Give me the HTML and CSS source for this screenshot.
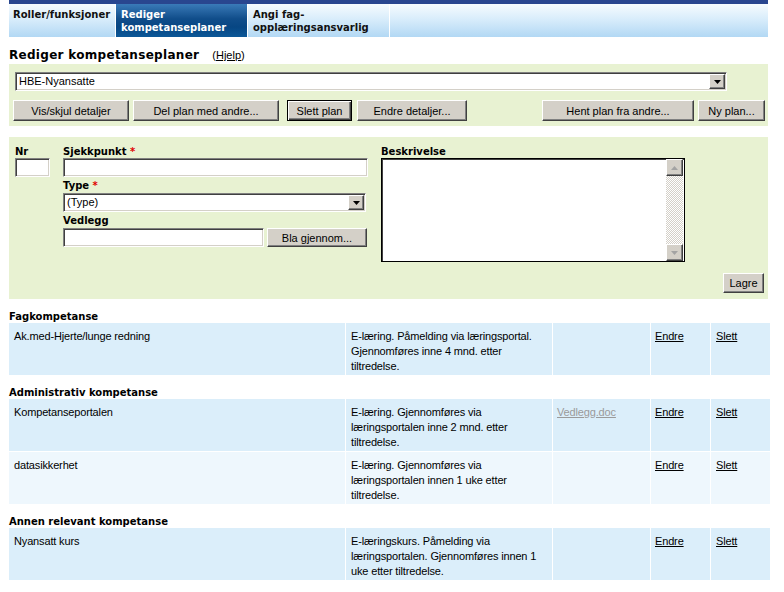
FILE: index.html
```html
<!DOCTYPE html>
<html lang="no">
<head>
<meta charset="utf-8">
<title>Rediger kompetanseplaner</title>
<link rel="stylesheet" href="styles.css">
</head>
<body>
<div class="page">
  <div class="topbar"></div>
  <nav class="tabs">
    <a class="tab tab-roles">Roller/funksjoner</a>
    <a class="tab tab-edit active">Rediger<br>kompetanseplaner</a>
    <a class="tab tab-resp">Angi fag-<br>opplæringsansvarlig</a>
    <div class="tab-fill"></div>
  </nav>

  <h1 class="title">Rediger kompetanseplaner<span class="help">(<u>Hjelp</u>)</span></h1>

  <div class="panel plan-panel">
    <div class="select plan-select">
      <span class="select-text">HBE-Nyansatte</span>
      <span class="select-btn"><svg width="7" height="4" viewBox="0 0 7 4"><path d="M0 0h7L3.5 4z" fill="#000"/></svg></span>
    </div>
    <div class="btn-row">
      <div class="btn-group">
        <button class="btn b-toggle">Vis/skjul detaljer</button>
        <button class="btn b-share">Del plan med andre...</button>
        <button class="btn btn-default b-delete">Slett plan</button>
        <button class="btn b-details">Endre detaljer...</button>
      </div>
      <div class="btn-group">
        <button class="btn b-fetch">Hent plan fra andre...</button>
        <button class="btn b-new">Ny plan...</button>
      </div>
    </div>
  </div>

  <div class="panel item-panel">
    <div class="item-grid">
      <div class="col">
        <div class="lbl">Nr</div>
        <div class="input f-nr"></div>
      </div>
      <div class="col">
        <div class="lbl">Sjekkpunkt <span class="req">*</span></div>
        <div class="input f-main"></div>
        <div class="lbl lbl-next">Type <span class="req">*</span></div>
        <div class="select f-type">
          <span class="select-text">(Type)</span>
          <span class="select-btn"><svg width="7" height="4" viewBox="0 0 7 4"><path d="M0 0h7L3.5 4z" fill="#000"/></svg></span>
        </div>
        <div class="lbl lbl-next">Vedlegg</div>
        <div class="file-row">
          <div class="input f-file"></div>
          <button class="btn b-browse">Bla gjennom...</button>
        </div>
      </div>
      <div class="col">
        <div class="lbl">Beskrivelse</div>
        <div class="textarea">
          <div class="scrollbar">
            <span class="sb-btn"><svg width="7" height="4" viewBox="0 0 7 4"><path d="M3.5 0L7 4H0z" fill="#a3a3a3"/></svg></span>
            <span class="sb-track"></span>
            <span class="sb-btn"><svg width="7" height="4" viewBox="0 0 7 4"><path d="M0 0h7L3.5 4z" fill="#a3a3a3"/></svg></span>
          </div>
        </div>
      </div>
    </div>
    <div class="save-row">
      <button class="btn b-save">Lagre</button>
    </div>
  </div>

  <section class="group">
    <h2 class="group-title">Fagkompetanse</h2>
    <table class="items">
      <colgroup><col class="c-name"><col class="c-desc"><col class="c-file"><col class="c-act"><col class="c-act"></colgroup>
      <tr>
        <td>Ak.med-Hjerte/lunge redning</td>
        <td>E-læring. Påmelding via læringsportal. Gjennomføres inne 4 mnd. etter tiltredelse.</td>
        <td></td>
        <td><a class="link">Endre</a></td>
        <td><a class="link">Slett</a></td>
      </tr>
    </table>
  </section>

  <section class="group">
    <h2 class="group-title">Administrativ kompetanse</h2>
    <table class="items">
      <colgroup><col class="c-name"><col class="c-desc"><col class="c-file"><col class="c-act"><col class="c-act"></colgroup>
      <tr>
        <td>Kompetanseportalen</td>
        <td>E-læring. Gjennomføres via læringsportalen inne 2 mnd. etter tiltredelse.</td>
        <td><a class="link link-file">Vedlegg.doc</a></td>
        <td><a class="link">Endre</a></td>
        <td><a class="link">Slett</a></td>
      </tr>
      <tr class="alt">
        <td>datasikkerhet</td>
        <td>E-læring. Gjennomføres via læringsportalen innen 1 uke etter tiltredelse.</td>
        <td></td>
        <td><a class="link">Endre</a></td>
        <td><a class="link">Slett</a></td>
      </tr>
    </table>
  </section>

  <section class="group">
    <h2 class="group-title">Annen relevant kompetanse</h2>
    <table class="items">
      <colgroup><col class="c-name"><col class="c-desc"><col class="c-file"><col class="c-act"><col class="c-act"></colgroup>
      <tr>
        <td>Nyansatt kurs</td>
        <td>E-læringskurs. Påmelding via læringsportalen. Gjennomføres innen 1 uke etter tiltredelse.</td>
        <td></td>
        <td><a class="link">Endre</a></td>
        <td><a class="link">Slett</a></td>
      </tr>
    </table>
  </section>
</div>
</body>
</html>
```

FILE: styles.css
```css
* { box-sizing: border-box; }

html, body {
  margin: 0;
  padding: 0;
  background: #fff;
}

body {
  font-family: "Liberation Sans", Arial, sans-serif;
  font-size: 11px;
  color: #000;
}

.page {
  margin-left: 9px;
  width: 760px;
}

/* ---------- header ---------- */
.topbar {
  width: 759px;
  height: 4px;
  background: #29468f;
}

.tabs {
  display: flex;
  width: 759px;
  height: 33px;
  background: linear-gradient(to bottom, #f6fbfe 0%, #d9edfb 45%, #b2d8f4 100%);
}

.tab {
  display: block;
  font-family: "DejaVu Sans", Verdana, sans-serif;
  font-weight: bold;
  font-size: 10px;
  line-height: 13px;
  padding: 4px 4px 0 4px;
  color: #111;
  text-decoration: none;
  border-right: 1px solid #fff;
}

.tab-roles { width: 107px; }
.tab-edit { width: 132px; padding-left: 5px; }
.tab-resp { width: 142px; padding-left: 5px; }
.tab-fill { flex: 1; }

.tab.active {
  color: #fff;
  background: linear-gradient(to bottom, #3a7ab8 0%, #104d8a 45%, #074683 70%, #0c5898 100%);
}

/* ---------- title ---------- */
.title {
  margin: 9px 0 0;
  height: 18px;
  line-height: 18px;
  font-family: "DejaVu Sans", Verdana, sans-serif;
  font-weight: bold;
  font-size: 12px;
  letter-spacing: 0.3px;
  color: #000;
}

.help {
  margin-left: 13px;
  font-family: "Liberation Sans", Arial, sans-serif;
  font-weight: normal;
  font-size: 11px;
  letter-spacing: 0;
}

/* ---------- panels ---------- */
.panel {
  width: 759px;
  background: #e8f2d2;
}

.plan-panel {
  padding: 8px 3px 5px 4px;
}

.item-panel {
  margin-top: 11px;
  margin-bottom: 1px;
  padding: 8px 4px 6px 6px;
}

/* ---------- form controls ---------- */
.input,
.select {
  height: 19px;
  background: #fff;
  border: 1px solid;
  border-color: #808080 #fff #fff #808080;
  box-shadow: inset 1px 1px #404040, inset -1px -1px #d4d0c8;
}

.select {
  display: flex;
  align-items: center;
  justify-content: space-between;
  padding: 1px 1px 1px 3px;
}

.select-text {
  line-height: 15px;
}

.select-btn {
  display: flex;
  align-items: center;
  justify-content: center;
  width: 16px;
  height: 15px;
  background: #d4d0c8;
  border: 1px solid;
  border-color: #fff #404040 #404040 #fff;
  box-shadow: inset -1px -1px #808080;
}

.plan-select {
  width: 712px;
  margin-left: 2px;
}

.btn {
  display: block;
  height: 21px;
  padding: 0;
  margin: 0;
  font-family: "Liberation Sans", Arial, sans-serif;
  font-size: 11px;
  color: #000;
  background: #d4d0c8;
  border: 1px solid;
  border-color: #fff #404040 #404040 #fff;
  box-shadow: inset -1px -1px #808080;
  text-align: center;
}

.btn-default {
  border-color: #000;
  box-shadow: inset 1px 1px #fff, inset -1px -1px #404040, inset -2px -2px #808080;
}

.btn-row {
  display: flex;
  justify-content: space-between;
  margin-top: 9px;
}

.btn-group {
  display: flex;
}

.b-toggle  { width: 116px; margin-right: 4px; }
.b-share   { width: 146px; margin-right: 8px; }
.b-delete  { width: 65px;  margin-right: 5px; }
.b-details { width: 110px; }
.b-fetch   { width: 152px; margin-right: 4px; }
.b-new     { width: 67px; }

/* ---------- item form ---------- */
.item-grid {
  display: grid;
  grid-template-columns: 35px 305px 304px;
  column-gap: 13px;
  align-items: start;
}

.lbl {
  height: 13px;
  line-height: 13px;
  font-family: "DejaVu Sans", Verdana, sans-serif;
  font-weight: bold;
  font-size: 10px;
  color: #000;
}

.lbl-next {
  height: 16px;
  line-height: 17px;
}

.req {
  color: #e00000;
}

.f-nr { width: 35px; }
.f-main { width: 305px; }
.f-type { width: 303px; }

.file-row {
  display: flex;
  gap: 3px;
}

.f-file { width: 201px; }
.b-browse { width: 100px; height: 19px; }

.textarea {
  display: flex;
  justify-content: flex-end;
  width: 304px;
  height: 104px;
  background: #fff;
  border: 1px solid #000;
  box-shadow: inset 1px 1px #404040;
}

.scrollbar {
  display: flex;
  flex-direction: column;
  width: 17px;
  height: 102px;
  margin-right: 1px;
}

.sb-btn {
  display: flex;
  align-items: center;
  justify-content: center;
  width: 17px;
  height: 17px;
  background: #d4d0c8;
  border: 1px solid;
  border-color: #fff #404040 #404040 #fff;
  box-shadow: inset -1px -1px #808080;
}

.sb-track {
  flex: 1;
  background: repeating-conic-gradient(#d4d0c8 0 25%, #fff 0 50%) 0 0 / 2px 2px;
}

.save-row {
  display: flex;
  justify-content: flex-end;
  margin-top: 11px;
}

.b-save {
  width: 41px;
  height: 20px;
}

/* ---------- groups ---------- */
.group {
  margin-top: 11px;
}

.group-title {
  margin: 0;
  height: 13px;
  line-height: 13px;
  font-family: "DejaVu Sans", Verdana, sans-serif;
  font-weight: bold;
  font-size: 10px;
  color: #000;
}

.items {
  width: 761px;
  table-layout: fixed;
  border-collapse: separate;
  border-spacing: 0;
}

.c-name { width: 336px; }
.c-desc { width: 207px; }
.c-file { width: 98px; }
.c-act  { width: 60px; }

.items td {
  vertical-align: top;
  background: #dbeefa;
  padding: 6px 4px 1px 5px;
  line-height: 15px;
  font-size: 11px;
  letter-spacing: -0.15px;
}

.items td + td {
  border-left: 1px solid #fff;
}

.items tr + tr td {
  border-top: 1px solid #fff;
}

.items tr.alt td {
  background: #eef7fd;
}

.items td:nth-child(3),
.items td:nth-child(4) {
  padding-left: 4px;
}

.link {
  color: #000;
  text-decoration: underline;
}

.link-file {
  color: #9a9a9a;
}
```
